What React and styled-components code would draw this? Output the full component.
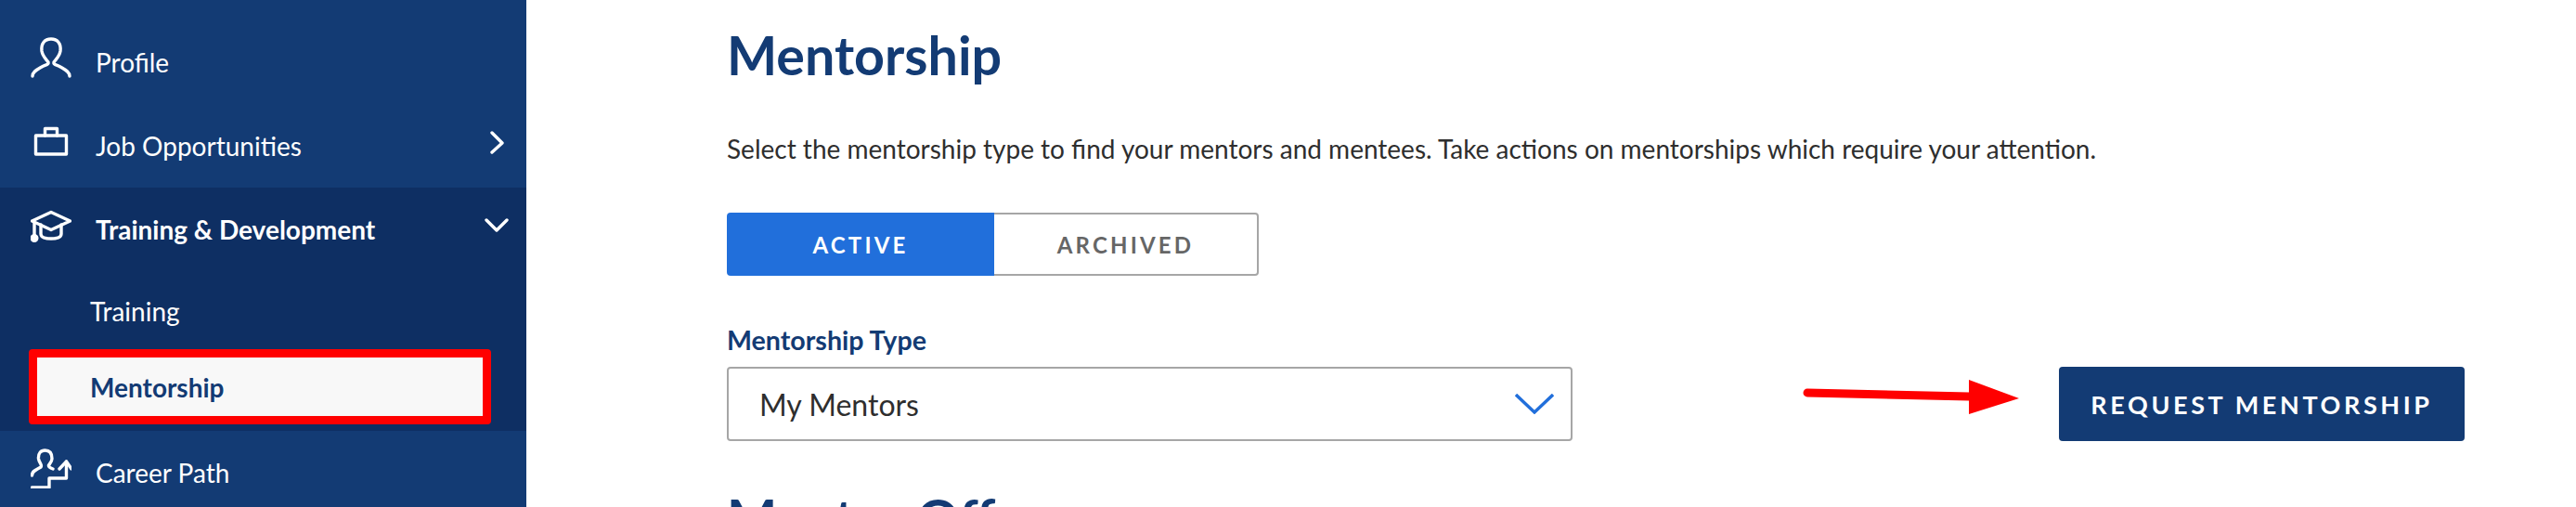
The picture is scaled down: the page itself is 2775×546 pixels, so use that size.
import React from 'react';
import styled, { createGlobalStyle } from 'styled-components';

const GlobalStyle = createGlobalStyle`
  html, body {
    margin: 0;
    padding: 0;
    height: 546px;
    overflow: hidden;
    background: #fff;
    font-family: Lato, "Open Sans", sans-serif;
  }
`;

const Page = styled.div`
  display: flex;
  width: 2775px;
  height: 546px;
  overflow: hidden;
`;

const Sidebar = styled.nav`
  width: 567px;
  flex: none;
  padding-top: 22px;
  background: #133b74;
  color: #fff;
`;

const NavRow = styled.div`
  display: flex;
  align-items: center;
  height: ${props => props.$height || '90px'};
  padding-left: 33px;
  font-size: 28px;
  font-weight: ${props => (props.$open ? 700 : 400)};
`;

const NavIcon = styled.svg`
  width: 44px;
  height: 44px;
  flex: none;
  margin-top: -10px;
  margin-right: 26px;
  fill: none;
  stroke: #fff;
  stroke-width: 3.4;
  stroke-linecap: round;
  stroke-linejoin: round;
`;

const NavChevron = styled.svg`
  margin-left: auto;
  margin-right: 19px;
  margin-top: -8px;
  width: 26px;
  height: 26px;
  fill: none;
  stroke: #fff;
  stroke-width: 3.4;
  stroke-linecap: round;
  stroke-linejoin: round;
`;

const OpenGroup = styled.div`
  background: #0e2f63;
  height: 262px;
`;

const SubItem = styled.div`
  display: flex;
  align-items: center;
  box-sizing: border-box;
  height: 85px;
  padding: 2px 0 0 97px;
  font-size: 28px;
`;

const ActiveSubItem = styled.div`
  display: flex;
  align-items: center;
  box-sizing: border-box;
  width: 498px;
  height: 81px;
  margin-left: 31px;
  padding-left: 57px;
  border: 9px solid #ff0000;
  border-radius: 4px;
  background: #f8f8f8;
  color: #133b74;
  font-size: 28px;
  font-weight: 700;
`;

const Main = styled.main`
  flex: 1;
  padding-left: 216px;
`;

const Title = styled.h1`
  margin: ${props => props.$top || '0'} 0 0;
  font-size: 57.4px;
  line-height: 68px;
  font-weight: 700;
  color: #133b74;
`;

const Intro = styled.p`
  margin: 49px 0 0;
  font-size: 28px;
  line-height: 36px;
  color: #2e2e2e;
`;

const Tabs = styled.div`
  display: flex;
  width: 573px;
  height: 68px;
  margin-top: 51px;
`;

const Tab = styled.div`
  display: flex;
  align-items: center;
  justify-content: center;
  box-sizing: border-box;
  width: ${props => (props.$active ? '288px' : '285px')};
  font-size: 24px;
  font-weight: 700;
  letter-spacing: 3.2px;
  background: ${props => (props.$active ? '#216fdb' : '#fff')};
  color: ${props => (props.$active ? '#fff' : '#666')};
  border: ${props => (props.$active ? 'none' : '2px solid #a6a6a6')};
  border-left: none;
  border-radius: ${props => (props.$active ? '4px 0 0 4px' : '0 4px 4px 0')};
`;

const FieldLabel = styled.label`
  display: block;
  margin-top: 53px;
  font-size: 28.6px;
  line-height: 32px;
  font-weight: 700;
  color: #133b74;
`;

const ControlRow = styled.div`
  display: flex;
  margin-top: 13px;
`;

const Select = styled.div`
  display: flex;
  align-items: center;
  justify-content: space-between;
  box-sizing: border-box;
  width: 911px;
  height: 80px;
  padding: 0 18px 0 33px;
  border: 2px solid #a6a6a6;
  border-radius: 4px;
  font-size: 32px;
  color: #2e2e2e;
`;

const PrimaryButton = styled.button`
  width: 437px;
  height: 80px;
  border: none;
  border-radius: 4px;
  background: #133b74;
  color: #fff;
  font-family: inherit;
  font-size: 27px;
  font-weight: 700;
  letter-spacing: 3.6px;
`;

const ArrowMark = styled.svg`
  width: 524px;
  height: 80px;
  flex: none;
`;

export default function App() {
  return (
    <Page>
      <GlobalStyle />
      <Sidebar>
        <NavRow>
          <NavIcon viewBox="0 0 44 44">
            <path d="M2 42c0-5 5-7 10-10 3-2 8-2 7-5-2-3-6-6-7-12C11 7 15 2 22 2s11 5 10 13c-1 6-5 9-7 12-1 3 4 3 7 5 5 3 10 5 10 10" />
          </NavIcon>
          Profile
        </NavRow>
        <NavRow>
          <NavIcon viewBox="0 0 44 44">
            <path d="M5.5 16h33v20h-33z" />
            <path d="M15.5 16V8.5h13V16" />
          </NavIcon>
          Job Opportunities
          <NavChevron viewBox="0 0 26 26">
            <path d="M8 3l11 11L8 24" />
          </NavChevron>
        </NavRow>
        <OpenGroup>
          <NavRow $open $height="89px">
            <NavIcon viewBox="0 0 44 44">
              <path d="M22 8.5L1.5 18 22 27.5 42.5 18z" />
              <path d="M11 22v10c0 3 3 5 11 5s11-2 11-5V22" />
              <path d="M4 19v16" />
              <circle cx="4" cy="36.5" r="2.8" fill="#fff" />
            </NavIcon>
            Training &amp; Development
            <NavChevron viewBox="0 0 26 26">
              <path d="M2 7l11 11L24 7" />
            </NavChevron>
          </NavRow>
          <SubItem>Training</SubItem>
          <ActiveSubItem>Mentorship</ActiveSubItem>
        </OpenGroup>
        <NavRow>
          <NavIcon viewBox="0 0 44 44">
            <path d="M1.5 43h18.500V33h18.500V15" />
            <path d="M31 23l7.500-8 5.500 8" />
            <path d="M1.500 30c0-5 4.500-6 9.500-9 2-2-2-5-2.500-9C8 6 11 3 15.500 3S23 6 23 12c0 3-2 5-3.500 7-.5 2 1.500 3 4.500 4" />
          </NavIcon>
          Career Path
        </NavRow>
      </Sidebar>
      <Main>
        <Title $top="25px">Mentorship</Title>
        <Intro>Select the mentorship type to find your mentors and mentees. Take actions on mentorships which require your attention.</Intro>
        <Tabs>
          <Tab $active>ACTIVE</Tab>
          <Tab>ARCHIVED</Tab>
        </Tabs>
        <FieldLabel>Mentorship Type</FieldLabel>
        <ControlRow>
          <Select>
            My Mentors
            <svg width="42" height="22" viewBox="0 0 42 22" fill="none" stroke="#216fdb" strokeWidth="3.4">
              <path d="M1 1l20 19L41 1" />
            </svg>
          </Select>
          <ArrowMark viewBox="0 0 524 80">
            <path d="M253 28L427 32" stroke="#ff0000" strokeWidth="9" strokeLinecap="round" />
            <path d="M427 14L481 34 427 51z" fill="#ff0000" />
          </ArrowMark>
          <PrimaryButton>REQUEST MENTORSHIP</PrimaryButton>
        </ControlRow>
        <Title $top="49px">Mentor Offers</Title>
      </Main>
    </Page>
  );
}
